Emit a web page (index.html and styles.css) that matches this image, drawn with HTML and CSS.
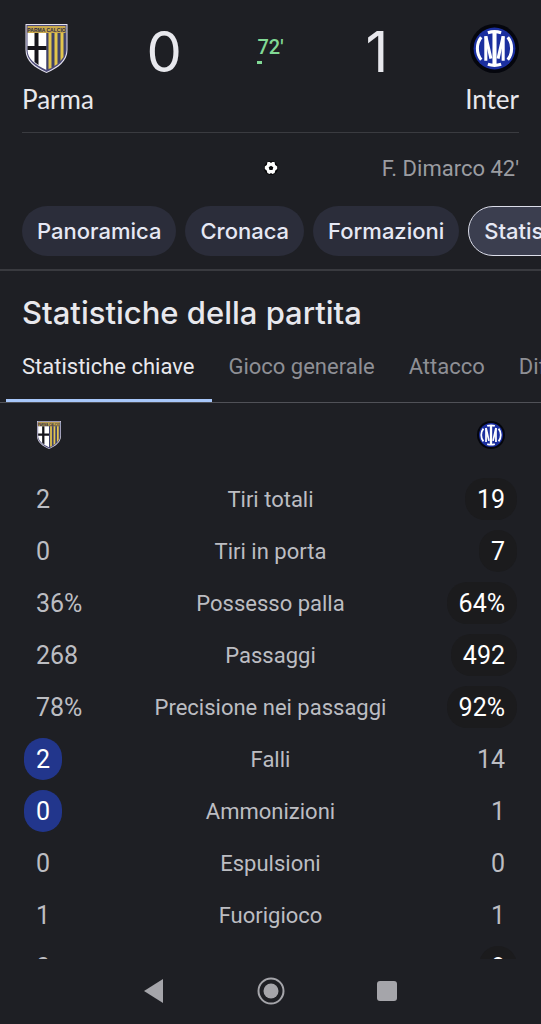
FILE: index.html
```html
<!DOCTYPE html>
<html lang="it">
<head>
  <meta charset="utf-8">
  <meta name="viewport" content="width=device-width, initial-scale=1">
  <title>Parma - Inter</title>
  <link rel="stylesheet" href="styles.css">
</head>
<body>
  <svg class="sprite" aria-hidden="true">
    <symbol id="parma" viewBox="0 0 42 49">
      <path d="M0 0H42V26C42 37 33 44 21 49C9 44 0 37 0 26Z" fill="#e4e2ee"/>
      <path d="M1 1H41V26C41 36 32 43 21 48C10 43 1 36 1 26Z" fill="#4c4a78"/>
      <path d="M2 9H21V46C10 41 2 35 2 26Z" fill="#fff"/>
      <path d="M21 9H40V26C40 35 32 41 21 46Z" fill="#3f4268"/>
      <path d="M23 9h3v35l-3 1zM29 9h3v31l-3 2zM35 9h3v24l-3 4z" fill="#e3c64c"/>
      <path d="M9 9h4v32l-4-3zM2 22h19v4H2z" fill="#16151b"/>
      <path d="M2 2h38v7H2z" fill="#c9a94c"/>
      <text x="21" y="8" text-anchor="middle" class="crest-text">PARMA CALCIO</text>
    </symbol>
    <symbol id="inter" viewBox="0 0 48 48">
      <circle cx="24" cy="24" r="24" fill="#05060d"/>
      <circle cx="24" cy="24" r="20.500" fill="#1b2f9f"/>
      <g fill="none" stroke="#fff">
        <path d="M11 13C6 19 6 29 11 35M37 13C42 19 42 29 37 35" stroke-width="3"/>
        <path d="M15.500 12V36M32.500 12V36" stroke-width="3"/>
        <path d="M24 8V40" stroke-width="4"/>
        <path d="M17.500 8.500Q24 6.500 30.500 8.500M17.500 39.500Q24 41.500 30.500 39.500" stroke-width="3"/>
        <path d="M15.500 12L20.500 34M32.500 12L27.500 34" stroke-width="3"/>
      </g>
    </symbol>
  </svg>

  <main class="content">
    <header class="match">
      <div class="scoreboard">
        <svg class="crest crest-home" role="img" aria-label="Stemma Parma"><use href="#parma"/></svg>
        <span class="score">0</span>
        <span class="minute">72'</span>
        <span class="score">1</span>
        <svg class="crest crest-away" role="img" aria-label="Stemma Inter"><use href="#inter"/></svg>
      </div>
      <div class="teams">
        <span>Parma</span>
        <span>Inter</span>
      </div>
      <div class="scorers">
        <svg class="ball" viewBox="0 0 14 14" role="img" aria-label="Gol">
          <circle cx="7" cy="7" r="7" fill="#08080a"/>
          <path d="M3.500 1H5.700L7 2L8.300 1H10.500L11.200 4L13.200 5.500V8L11.300 9.500L10.600 12L8.500 13L7 12L5.500 13L3.400 12L2.700 9.500L.8 8V5.500L2.800 4Z" fill="#fff"/>
          <path d="M7 4.700L9.300 6.300L8.500 9H5.500L4.700 6.300Z" fill="#08080a"/>
        </svg>
        <span class="scorer">F. Dimarco 42'</span>
      </div>
    </header>

    <nav class="pills" aria-label="Sezioni">
      <a class="pill" href="#panoramica">Panoramica</a>
      <a class="pill" href="#cronaca">Cronaca</a>
      <a class="pill" href="#formazioni">Formazioni</a>
      <a class="pill selected" href="#statistiche">Statistiche</a>
    </nav>

    <section class="stats" id="statistiche">
      <h1>Statistiche della partita</h1>
      <nav class="tabs" aria-label="Categorie">
        <a class="tab active" href="#chiave">Statistiche chiave</a>
        <a class="tab" href="#gioco">Gioco generale</a>
        <a class="tab" href="#attacco">Attacco</a>
        <a class="tab" href="#difesa">Difesa</a>
      </nav>

      <table class="stat-table" id="chiave">
        <thead>
          <tr>
            <th><svg class="small-crest small-home" role="img" aria-label="Parma"><use href="#parma"/></svg></th>
            <td></td>
            <th><svg class="small-crest" role="img" aria-label="Inter"><use href="#inter"/></svg></th>
          </tr>
        </thead>
        <tbody>
          <tr><td><span class="value">2</span></td><th scope="row">Tiri totali</th><td><span class="value away-best">19</span></td></tr>
          <tr><td><span class="value">0</span></td><th scope="row">Tiri in porta</th><td><span class="value away-best">7</span></td></tr>
          <tr><td><span class="value">36%</span></td><th scope="row">Possesso palla</th><td><span class="value away-best">64%</span></td></tr>
          <tr><td><span class="value">268</span></td><th scope="row">Passaggi</th><td><span class="value away-best">492</span></td></tr>
          <tr><td><span class="value">78%</span></td><th scope="row">Precisione nei passaggi</th><td><span class="value away-best">92%</span></td></tr>
          <tr><td><span class="value home-best">2</span></td><th scope="row">Falli</th><td><span class="value">14</span></td></tr>
          <tr><td><span class="value home-best">0</span></td><th scope="row">Ammonizioni</th><td><span class="value">1</span></td></tr>
          <tr><td><span class="value">0</span></td><th scope="row">Espulsioni</th><td><span class="value">0</span></td></tr>
          <tr><td><span class="value">1</span></td><th scope="row">Fuorigioco</th><td><span class="value">1</span></td></tr>
          <tr><td><span class="value">0</span></td><th scope="row">Calci d'angolo</th><td><span class="value away-best">8</span></td></tr>
        </tbody>
      </table>
    </section>
  </main>

  <footer class="system-bar">
    <button type="button" aria-label="Indietro">
      <svg viewBox="0 0 28 28"><path d="M3 14L22 2V26Z"/></svg>
    </button>
    <button type="button" aria-label="Home">
      <svg viewBox="0 0 28 28"><circle cx="14" cy="14" r="12.500" class="ring"/><circle cx="14" cy="14" r="7.500"/></svg>
    </button>
    <button type="button" aria-label="App recenti">
      <svg viewBox="0 0 28 28"><rect x="4" y="4" width="20" height="20" rx="3"/></svg>
    </button>
  </footer>
</body>
</html>
```
FILE: styles.css
```css
* {
  box-sizing: border-box;
}

body {
  margin: 0;
  height: 100vh;
  display: flex;
  flex-direction: column;
  overflow: hidden;
  background: #1e1f24;
  color: #e8e8ed;
  font-family: Roboto, sans-serif;
  font-size: 22px;
}

a {
  color: inherit;
  text-decoration: none;
}

.sprite {
  display: none;
}

.content {
  flex: 1;
  min-height: 0;
  overflow: hidden;
}

/* score */
.match {
  padding: 24px 22px 0;
}

.scoreboard {
  display: grid;
  grid-template-columns: 89px 1fr 1fr 1fr 89px;
  align-items: start;
  height: 49px;
  text-align: center;
}

.crest {
  width: 49px;
  height: 49px;
}

.crest-away {
  justify-self: end;
}

.crest-text {
  font: bold 5px "Liberation Sans", sans-serif;
  fill: #2c2a4a;
}

.score {
  font-family: Inter, sans-serif;
  font-size: 56px;
  line-height: 56px;
}

.minute {
  justify-self: center;
  padding-top: 11px;
  font-size: 20px;
  font-weight: 500;
  line-height: 24px;
  color: #81d995;
}

.minute::after {
  content: "";
  display: block;
  width: 5px;
  height: 3px;
  margin-top: 2px;
  background: #81d995;
}

.teams {
  display: flex;
  justify-content: space-between;
  padding: 10px 0 17px;
  border-bottom: 1px solid #3a3b40;
  font-family: Lato, sans-serif;
  font-size: 26px;
  line-height: 32px;
}

.scorers {
  display: grid;
  grid-template-columns: 1fr 14px 1fr;
  height: 73px;
  padding-top: 23px;
  line-height: 26px;
  color: #9b9ca1;
}

.ball {
  grid-column: 2;
  width: 14px;
  height: 14px;
  margin-top: 5px;
}

.scorer {
  text-align: right;
}

/* section links */
.pills {
  display: flex;
  gap: 9px;
  padding: 0 22px 13px;
  border-bottom: 2px solid #393a3f;
  overflow: hidden;
}

.pill {
  flex: none;
  height: 50px;
  padding: 0 15px;
  border-radius: 25px;
  background: #2b2d3a;
  color: #e6e8f4;
  font-family: Inter, sans-serif;
  font-weight: 500;
  line-height: 50px;
}

.pill.selected {
  border: 1px solid #dcdeea;
  background: #3b3e4f;
  line-height: 48px;
}

/* stats */
h1 {
  margin: 0;
  padding: 24px 22px 0;
  font-family: Inter, sans-serif;
  font-size: 31px;
  font-weight: 500;
  line-height: 36px;
}

.tabs {
  display: flex;
  height: 72px;
  padding-left: 6px;
  border-bottom: 1px solid #505157;
  overflow: hidden;
}

.tab {
  flex: none;
  padding: 20px 18px 0 16px;
  line-height: 32px;
  color: #8e8f95;
}

.tab.active {
  border-bottom: 3px solid #a8c7fa;
  color: #e8e8ed;
}

.stat-table {
  width: 100%;
  border-collapse: collapse;
}

.stat-table tr {
  height: 52px;
}

.stat-table thead tr {
  height: 70px;
}

.stat-table td,
.stat-table th {
  padding: 0;
  color: #bcbdc2;
  font-weight: 400;
}

.stat-table tr > :first-child {
  width: 25%;
  padding-left: 24px;
  text-align: left;
}

.stat-table tr > :last-child {
  width: 25%;
  padding-right: 24px;
  text-align: right;
}

.stat-table thead th {
  padding-top: 18px;
  vertical-align: top;
}

.small-crest {
  display: inline-block;
  width: 28px;
  height: 28px;
  margin-right: 12px;
}

.small-home {
  margin-left: 11px;
}

.value {
  display: inline-block;
  height: 42px;
  padding: 0 12px;
  border-radius: 20px;
  font-size: 25px;
  line-height: 44px;
  vertical-align: middle;
}

.home-best {
  background: #22368c;
  color: #fff;
}

.away-best {
  background: #1b1b1d;
  color: #fff;
}

/* android buttons */
.system-bar {
  display: flex;
  flex: none;
  justify-content: center;
  gap: 88px;
  height: 65px;
  padding-top: 18px;
}

.system-bar button {
  width: 28px;
  height: 28px;
  padding: 0;
  border: 0;
  background: none;
}

.system-bar svg {
  display: block;
  fill: #a5a5aa;
}

.system-bar .ring {
  fill: none;
  stroke: #a5a5aa;
  stroke-width: 2;
}
```
